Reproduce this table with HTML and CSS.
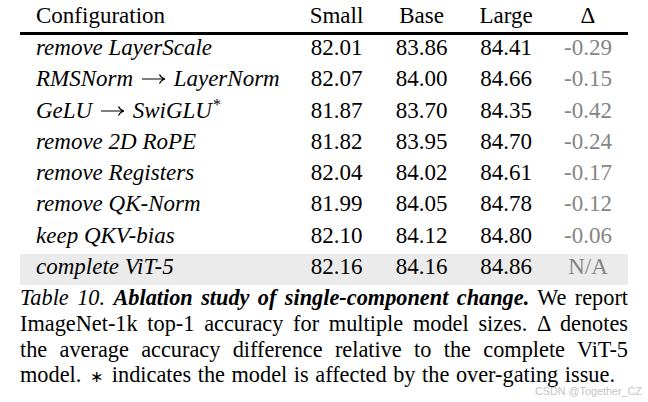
FILE: index.html
```html
<!DOCTYPE html>
<html>
<head>
<meta charset="utf-8">
<link rel="stylesheet" href="styles.css">
</head>
<body>
<div class="page">
  <div class="table">
    <div class="row head">
      <div class="cfg up">Configuration</div>
      <div class="num">Small</div>
      <div class="num">Base</div>
      <div class="num">Large</div>
      <div class="num">Δ</div>
    </div>
    <div class="rule"></div>
    <div class="row">
      <div class="cfg">remove LayerScale</div>
      <div class="num">82.01</div><div class="num">83.86</div><div class="num">84.41</div><div class="num delta">-0.29</div>
    </div>
    <div class="row">
      <div class="cfg">RMSNorm <svg class="arrow" width="25" height="12" viewBox="0 0 25 12"><path d="M1 6H23.5M18.5 1.5Q20 5 24 6Q20 7 18.5 10.5" fill="none" stroke="#000" stroke-width="1.2"/></svg> LayerNorm</div>
      <div class="num">82.07</div><div class="num">84.00</div><div class="num">84.66</div><div class="num delta">-0.15</div>
    </div>
    <div class="row">
      <div class="cfg">GeLU <svg class="arrow" width="25" height="12" viewBox="0 0 25 12"><path d="M1 6H23.5M18.5 1.5Q20 5 24 6Q20 7 18.5 10.5" fill="none" stroke="#000" stroke-width="1.2"/></svg> SwiGLU<sup class="star">*</sup></div>
      <div class="num">81.87</div><div class="num">83.70</div><div class="num">84.35</div><div class="num delta">-0.42</div>
    </div>
    <div class="row">
      <div class="cfg">remove 2D RoPE</div>
      <div class="num">81.82</div><div class="num">83.95</div><div class="num">84.70</div><div class="num delta">-0.24</div>
    </div>
    <div class="row">
      <div class="cfg">remove Registers</div>
      <div class="num">82.04</div><div class="num">84.02</div><div class="num">84.61</div><div class="num delta">-0.17</div>
    </div>
    <div class="row">
      <div class="cfg">remove QK-Norm</div>
      <div class="num">81.99</div><div class="num">84.05</div><div class="num">84.78</div><div class="num delta">-0.12</div>
    </div>
    <div class="row">
      <div class="cfg">keep QKV-bias</div>
      <div class="num">82.10</div><div class="num">84.12</div><div class="num">84.80</div><div class="num delta">-0.06</div>
    </div>
    <div class="row shaded">
      <div class="cfg">complete ViT-5</div>
      <div class="num">82.16</div><div class="num">84.16</div><div class="num">84.86</div><div class="num delta">N/A</div>
    </div>
  </div>
  <div class="caption">
    <span class="line"><i>Table 10.</i> <b><i>Ablation study of single-component change.</i></b> We report</span>
    <span class="line">ImageNet-1k top-1 accuracy for multiple model sizes. Δ denotes</span>
    <span class="line">the average accuracy difference relative to the complete ViT-5</span>
    <span class="line last">model. <span class="ast">∗</span> indicates the model is affected by the over-gating issue.</span>
  </div>
  <div class="watermark">CSDN @Together_CZ</div>
</div>
</body>
</html>
```
FILE: styles.css
```css
html, body {
  margin: 0;
  padding: 0;
  background: #ffffff;
}
.page {
  position: relative;
  width: 648px;
  height: 402px;
  overflow: hidden;
  font-family: "Liberation Serif", "Times New Roman", serif;
  color: #000;
}
.table {
  margin-left: 20px;
  width: 608px;
}
.row {
  display: grid;
  grid-template-columns: 274px 85px 85px 84px 80px;
  font-size: 23px;
  line-height: 25px;
  padding-bottom: 6.3px;
}
.row.head {
  padding-top: 3px;
  padding-bottom: 4px;
}
.rule {
  height: 3px;
  background: #000;
}
.cfg {
  padding-left: 16px;
  font-style: italic;
  white-space: nowrap;
}
.cfg.up {
  font-style: normal;
}
.arrow {
  vertical-align: 1px;
  margin: 0 2px;
}
.star {
  font-style: normal;
  font-size: 16px;
  line-height: 0;
  vertical-align: 8px;
  margin-left: 1px;
}
.num {
  text-align: center;
}
.delta {
  color: #858585;
}
.shaded {
  background: #ebebeb;
}
.caption {
  margin-left: 20px;
  width: 608px;
  font-size: 22.3px;
  line-height: 25.6px;
  word-spacing: 1px;
}
.line {
  display: block;
  text-align: justify;
  text-align-last: justify;
  white-space: nowrap;
}
.line.last {
  text-align-last: left;
}
.ast {
  font-family: "DejaVu Sans", sans-serif;
  font-size: 16px;
  margin: 0 2px;
}
.watermark {
  position: absolute;
  left: 535px;
  top: 385px;
  font-family: "Liberation Sans", sans-serif;
  font-size: 10.8px;
  color: #c4c4c4;
  white-space: nowrap;
}
```
